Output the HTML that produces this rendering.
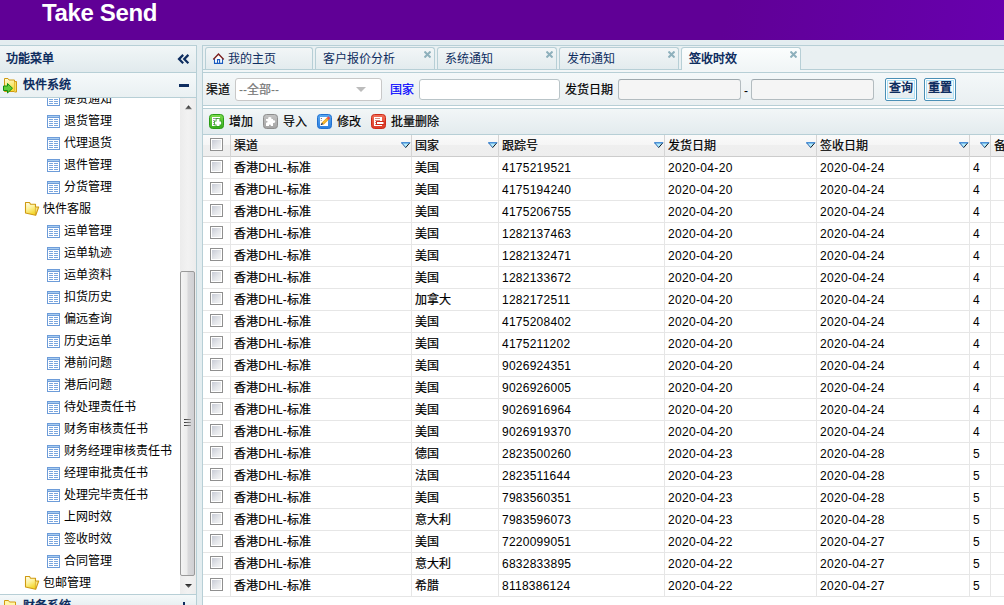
<!DOCTYPE html><html lang="zh-CN"><head><meta charset="utf-8"><style>
*{box-sizing:border-box}
html,body{margin:0;padding:0;width:1004px;height:605px;overflow:hidden;background:#e4edf0;font-family:"Liberation Sans",sans-serif;font-size:12px;color:#000}
.c{-webkit-text-stroke:0.2px currentColor}
[style*="font-weight:bold"] .c,.tn .c,.ns .c{-webkit-text-stroke:0}
.a{position:absolute}
.hb{position:absolute;height:1px;background:#b7cfd6}
.vb{position:absolute;width:1px;background:#b7cfd6}
.tn{position:absolute;height:22px;line-height:22px;white-space:nowrap}
.gt{position:absolute;height:22px;line-height:22px;white-space:nowrap;font-size:12px}
</style></head><body>
<div class="a" style="left:0;top:0;width:1004px;height:40px;background:linear-gradient(100deg,#600096 0,#600096 72%,#6400a4 88%,#6800ae 100%)"></div>
<div class="a" style="left:42px;top:0px;color:#fff;font-weight:bold;font-size:24px;line-height:26px;letter-spacing:-0.35px">Take Send</div>
<div class="a" style="left:0;top:45px;width:196px;height:560px;background:#fff"></div>
<div class="hb" style="left:0;top:45px;width:197px"></div>
<div class="vb" style="left:196px;top:45px;height:560px"></div>
<div class="a" style="left:0;top:46px;width:196px;height:26px;background:linear-gradient(#f1f6f7,#e1eaed)"></div>
<div class="hb" style="left:0;top:72px;width:196px"></div>
<div class="a" style="left:6px;top:47px;line-height:24px;font-weight:bold;color:#0e2d5f"><span class="c">功能菜单</span></div>
<svg class="a" style="left:176px;top:52px" width="14" height="14" viewBox="0 0 14 14"><path d="M7.2 2.9 L3 7.1 L7.2 11.3 M12.4 2.9 L8.2 7.1 L12.4 11.3" stroke="#0e2d5f" stroke-width="2.2" fill="none"/></svg>
<div class="a" style="left:0;top:73px;width:196px;height:24px;background:linear-gradient(#f5f9fa,#e9f0f2)"></div>
<div class="hb" style="left:0;top:97px;width:196px"></div>
<div class="a" style="left:23px;top:73px;line-height:24px;font-weight:bold;color:#0e2d5f"><span class="c">快件系统</span></div>
<div class="a" style="left:179px;top:84px;width:10px;height:3px;background:#0e2d5f"></div>
<svg class="a" style="left:2px;top:77px" width="17" height="17" viewBox="0 0 17 17">
<defs><linearGradient id="fya" x1="0" y1="0" x2="0.3" y2="1"><stop offset="0" stop-color="#fffde0"/><stop offset="1" stop-color="#f6dc3a"/></linearGradient></defs>
<path d="M2.5 1.5 H6 L7 3 H12.5 V14.5 H2.5 Z" fill="url(#fya)" stroke="#cf9a12" stroke-width="1"/>
<path d="M12.5 4.5 H14.5 V15 H12.5" fill="#f8e060" stroke="#cf9a12" stroke-width="1"/>
<path d="M1.5 9 H5.5 V6.5 L10.5 11.2 L5.5 16 V13.5 H1.5 Z" fill="#62cc3a" stroke="#109010" stroke-width="1"/>
</svg>
<div class="a" style="left:0;top:98px;width:180px;height:496px;overflow:hidden">
<svg class="a" style="left:47px;top:-5px" width="13" height="13" viewBox="0 0 13 13" shape-rendering="crispEdges">
<rect x="0.5" y="0.5" width="12" height="12" fill="#fff" stroke="#6d9cd9"/>
<rect x="1" y="1" width="11" height="1" fill="#a9cdf0"/>
<rect x="1" y="2" width="11" height="1" fill="#6d9cd9"/>
<rect x="2" y="4" width="4" height="1" fill="#7aa6de"/><rect x="7" y="4" width="4" height="1" fill="#7aa6de"/>
<rect x="2" y="6" width="4" height="1" fill="#7aa6de"/><rect x="7" y="6" width="4" height="1" fill="#7aa6de"/>
<rect x="2" y="8" width="4" height="1" fill="#7aa6de"/><rect x="7" y="8" width="4" height="1" fill="#7aa6de"/>
<rect x="2" y="10" width="4" height="1" fill="#7aa6de"/><rect x="7" y="10" width="4" height="1" fill="#7aa6de"/>
</svg>
<div class="tn" style="left:64px;top:-10px"><span class="c">提货通知</span></div>
<svg class="a" style="left:47px;top:17px" width="13" height="13" viewBox="0 0 13 13" shape-rendering="crispEdges">
<rect x="0.5" y="0.5" width="12" height="12" fill="#fff" stroke="#6d9cd9"/>
<rect x="1" y="1" width="11" height="1" fill="#a9cdf0"/>
<rect x="1" y="2" width="11" height="1" fill="#6d9cd9"/>
<rect x="2" y="4" width="4" height="1" fill="#7aa6de"/><rect x="7" y="4" width="4" height="1" fill="#7aa6de"/>
<rect x="2" y="6" width="4" height="1" fill="#7aa6de"/><rect x="7" y="6" width="4" height="1" fill="#7aa6de"/>
<rect x="2" y="8" width="4" height="1" fill="#7aa6de"/><rect x="7" y="8" width="4" height="1" fill="#7aa6de"/>
<rect x="2" y="10" width="4" height="1" fill="#7aa6de"/><rect x="7" y="10" width="4" height="1" fill="#7aa6de"/>
</svg>
<div class="tn" style="left:64px;top:12px"><span class="c">退货管理</span></div>
<svg class="a" style="left:47px;top:39px" width="13" height="13" viewBox="0 0 13 13" shape-rendering="crispEdges">
<rect x="0.5" y="0.5" width="12" height="12" fill="#fff" stroke="#6d9cd9"/>
<rect x="1" y="1" width="11" height="1" fill="#a9cdf0"/>
<rect x="1" y="2" width="11" height="1" fill="#6d9cd9"/>
<rect x="2" y="4" width="4" height="1" fill="#7aa6de"/><rect x="7" y="4" width="4" height="1" fill="#7aa6de"/>
<rect x="2" y="6" width="4" height="1" fill="#7aa6de"/><rect x="7" y="6" width="4" height="1" fill="#7aa6de"/>
<rect x="2" y="8" width="4" height="1" fill="#7aa6de"/><rect x="7" y="8" width="4" height="1" fill="#7aa6de"/>
<rect x="2" y="10" width="4" height="1" fill="#7aa6de"/><rect x="7" y="10" width="4" height="1" fill="#7aa6de"/>
</svg>
<div class="tn" style="left:64px;top:34px"><span class="c">代理退货</span></div>
<svg class="a" style="left:47px;top:61px" width="13" height="13" viewBox="0 0 13 13" shape-rendering="crispEdges">
<rect x="0.5" y="0.5" width="12" height="12" fill="#fff" stroke="#6d9cd9"/>
<rect x="1" y="1" width="11" height="1" fill="#a9cdf0"/>
<rect x="1" y="2" width="11" height="1" fill="#6d9cd9"/>
<rect x="2" y="4" width="4" height="1" fill="#7aa6de"/><rect x="7" y="4" width="4" height="1" fill="#7aa6de"/>
<rect x="2" y="6" width="4" height="1" fill="#7aa6de"/><rect x="7" y="6" width="4" height="1" fill="#7aa6de"/>
<rect x="2" y="8" width="4" height="1" fill="#7aa6de"/><rect x="7" y="8" width="4" height="1" fill="#7aa6de"/>
<rect x="2" y="10" width="4" height="1" fill="#7aa6de"/><rect x="7" y="10" width="4" height="1" fill="#7aa6de"/>
</svg>
<div class="tn" style="left:64px;top:56px"><span class="c">退件管理</span></div>
<svg class="a" style="left:47px;top:83px" width="13" height="13" viewBox="0 0 13 13" shape-rendering="crispEdges">
<rect x="0.5" y="0.5" width="12" height="12" fill="#fff" stroke="#6d9cd9"/>
<rect x="1" y="1" width="11" height="1" fill="#a9cdf0"/>
<rect x="1" y="2" width="11" height="1" fill="#6d9cd9"/>
<rect x="2" y="4" width="4" height="1" fill="#7aa6de"/><rect x="7" y="4" width="4" height="1" fill="#7aa6de"/>
<rect x="2" y="6" width="4" height="1" fill="#7aa6de"/><rect x="7" y="6" width="4" height="1" fill="#7aa6de"/>
<rect x="2" y="8" width="4" height="1" fill="#7aa6de"/><rect x="7" y="8" width="4" height="1" fill="#7aa6de"/>
<rect x="2" y="10" width="4" height="1" fill="#7aa6de"/><rect x="7" y="10" width="4" height="1" fill="#7aa6de"/>
</svg>
<div class="tn" style="left:64px;top:78px"><span class="c">分货管理</span></div>
<svg class="a" style="left:24px;top:103px" width="16" height="16" viewBox="0 0 16 16">
<defs><linearGradient id="fy103" x1="0" y1="0" x2="0.4" y2="1"><stop offset="0" stop-color="#fffef0"/><stop offset="0.5" stop-color="#fdf3a0"/><stop offset="1" stop-color="#f4d830"/></linearGradient></defs>
<path d="M1.5 1.5 H5.5 L6.6 3.3 H11.5 V14.3 L1.5 12 Z" fill="url(#fy103)" stroke="#cf9a12" stroke-width="1.1" stroke-linejoin="round"/>
<path d="M11.5 6 H14.7 L11.7 14.3" fill="#fbe680" stroke="#cf9a12" stroke-width="1.1" stroke-linejoin="round"/>
</svg>
<div class="tn" style="left:43px;top:100px"><span class="c">快件客服</span></div>
<svg class="a" style="left:47px;top:127px" width="13" height="13" viewBox="0 0 13 13" shape-rendering="crispEdges">
<rect x="0.5" y="0.5" width="12" height="12" fill="#fff" stroke="#6d9cd9"/>
<rect x="1" y="1" width="11" height="1" fill="#a9cdf0"/>
<rect x="1" y="2" width="11" height="1" fill="#6d9cd9"/>
<rect x="2" y="4" width="4" height="1" fill="#7aa6de"/><rect x="7" y="4" width="4" height="1" fill="#7aa6de"/>
<rect x="2" y="6" width="4" height="1" fill="#7aa6de"/><rect x="7" y="6" width="4" height="1" fill="#7aa6de"/>
<rect x="2" y="8" width="4" height="1" fill="#7aa6de"/><rect x="7" y="8" width="4" height="1" fill="#7aa6de"/>
<rect x="2" y="10" width="4" height="1" fill="#7aa6de"/><rect x="7" y="10" width="4" height="1" fill="#7aa6de"/>
</svg>
<div class="tn" style="left:64px;top:122px"><span class="c">运单管理</span></div>
<svg class="a" style="left:47px;top:149px" width="13" height="13" viewBox="0 0 13 13" shape-rendering="crispEdges">
<rect x="0.5" y="0.5" width="12" height="12" fill="#fff" stroke="#6d9cd9"/>
<rect x="1" y="1" width="11" height="1" fill="#a9cdf0"/>
<rect x="1" y="2" width="11" height="1" fill="#6d9cd9"/>
<rect x="2" y="4" width="4" height="1" fill="#7aa6de"/><rect x="7" y="4" width="4" height="1" fill="#7aa6de"/>
<rect x="2" y="6" width="4" height="1" fill="#7aa6de"/><rect x="7" y="6" width="4" height="1" fill="#7aa6de"/>
<rect x="2" y="8" width="4" height="1" fill="#7aa6de"/><rect x="7" y="8" width="4" height="1" fill="#7aa6de"/>
<rect x="2" y="10" width="4" height="1" fill="#7aa6de"/><rect x="7" y="10" width="4" height="1" fill="#7aa6de"/>
</svg>
<div class="tn" style="left:64px;top:144px"><span class="c">运单轨迹</span></div>
<svg class="a" style="left:47px;top:171px" width="13" height="13" viewBox="0 0 13 13" shape-rendering="crispEdges">
<rect x="0.5" y="0.5" width="12" height="12" fill="#fff" stroke="#6d9cd9"/>
<rect x="1" y="1" width="11" height="1" fill="#a9cdf0"/>
<rect x="1" y="2" width="11" height="1" fill="#6d9cd9"/>
<rect x="2" y="4" width="4" height="1" fill="#7aa6de"/><rect x="7" y="4" width="4" height="1" fill="#7aa6de"/>
<rect x="2" y="6" width="4" height="1" fill="#7aa6de"/><rect x="7" y="6" width="4" height="1" fill="#7aa6de"/>
<rect x="2" y="8" width="4" height="1" fill="#7aa6de"/><rect x="7" y="8" width="4" height="1" fill="#7aa6de"/>
<rect x="2" y="10" width="4" height="1" fill="#7aa6de"/><rect x="7" y="10" width="4" height="1" fill="#7aa6de"/>
</svg>
<div class="tn" style="left:64px;top:166px"><span class="c">运单资料</span></div>
<svg class="a" style="left:47px;top:193px" width="13" height="13" viewBox="0 0 13 13" shape-rendering="crispEdges">
<rect x="0.5" y="0.5" width="12" height="12" fill="#fff" stroke="#6d9cd9"/>
<rect x="1" y="1" width="11" height="1" fill="#a9cdf0"/>
<rect x="1" y="2" width="11" height="1" fill="#6d9cd9"/>
<rect x="2" y="4" width="4" height="1" fill="#7aa6de"/><rect x="7" y="4" width="4" height="1" fill="#7aa6de"/>
<rect x="2" y="6" width="4" height="1" fill="#7aa6de"/><rect x="7" y="6" width="4" height="1" fill="#7aa6de"/>
<rect x="2" y="8" width="4" height="1" fill="#7aa6de"/><rect x="7" y="8" width="4" height="1" fill="#7aa6de"/>
<rect x="2" y="10" width="4" height="1" fill="#7aa6de"/><rect x="7" y="10" width="4" height="1" fill="#7aa6de"/>
</svg>
<div class="tn" style="left:64px;top:188px"><span class="c">扣货历史</span></div>
<svg class="a" style="left:47px;top:215px" width="13" height="13" viewBox="0 0 13 13" shape-rendering="crispEdges">
<rect x="0.5" y="0.5" width="12" height="12" fill="#fff" stroke="#6d9cd9"/>
<rect x="1" y="1" width="11" height="1" fill="#a9cdf0"/>
<rect x="1" y="2" width="11" height="1" fill="#6d9cd9"/>
<rect x="2" y="4" width="4" height="1" fill="#7aa6de"/><rect x="7" y="4" width="4" height="1" fill="#7aa6de"/>
<rect x="2" y="6" width="4" height="1" fill="#7aa6de"/><rect x="7" y="6" width="4" height="1" fill="#7aa6de"/>
<rect x="2" y="8" width="4" height="1" fill="#7aa6de"/><rect x="7" y="8" width="4" height="1" fill="#7aa6de"/>
<rect x="2" y="10" width="4" height="1" fill="#7aa6de"/><rect x="7" y="10" width="4" height="1" fill="#7aa6de"/>
</svg>
<div class="tn" style="left:64px;top:210px"><span class="c">偏远查询</span></div>
<svg class="a" style="left:47px;top:237px" width="13" height="13" viewBox="0 0 13 13" shape-rendering="crispEdges">
<rect x="0.5" y="0.5" width="12" height="12" fill="#fff" stroke="#6d9cd9"/>
<rect x="1" y="1" width="11" height="1" fill="#a9cdf0"/>
<rect x="1" y="2" width="11" height="1" fill="#6d9cd9"/>
<rect x="2" y="4" width="4" height="1" fill="#7aa6de"/><rect x="7" y="4" width="4" height="1" fill="#7aa6de"/>
<rect x="2" y="6" width="4" height="1" fill="#7aa6de"/><rect x="7" y="6" width="4" height="1" fill="#7aa6de"/>
<rect x="2" y="8" width="4" height="1" fill="#7aa6de"/><rect x="7" y="8" width="4" height="1" fill="#7aa6de"/>
<rect x="2" y="10" width="4" height="1" fill="#7aa6de"/><rect x="7" y="10" width="4" height="1" fill="#7aa6de"/>
</svg>
<div class="tn" style="left:64px;top:232px"><span class="c">历史运单</span></div>
<svg class="a" style="left:47px;top:259px" width="13" height="13" viewBox="0 0 13 13" shape-rendering="crispEdges">
<rect x="0.5" y="0.5" width="12" height="12" fill="#fff" stroke="#6d9cd9"/>
<rect x="1" y="1" width="11" height="1" fill="#a9cdf0"/>
<rect x="1" y="2" width="11" height="1" fill="#6d9cd9"/>
<rect x="2" y="4" width="4" height="1" fill="#7aa6de"/><rect x="7" y="4" width="4" height="1" fill="#7aa6de"/>
<rect x="2" y="6" width="4" height="1" fill="#7aa6de"/><rect x="7" y="6" width="4" height="1" fill="#7aa6de"/>
<rect x="2" y="8" width="4" height="1" fill="#7aa6de"/><rect x="7" y="8" width="4" height="1" fill="#7aa6de"/>
<rect x="2" y="10" width="4" height="1" fill="#7aa6de"/><rect x="7" y="10" width="4" height="1" fill="#7aa6de"/>
</svg>
<div class="tn" style="left:64px;top:254px"><span class="c">港前问题</span></div>
<svg class="a" style="left:47px;top:281px" width="13" height="13" viewBox="0 0 13 13" shape-rendering="crispEdges">
<rect x="0.5" y="0.5" width="12" height="12" fill="#fff" stroke="#6d9cd9"/>
<rect x="1" y="1" width="11" height="1" fill="#a9cdf0"/>
<rect x="1" y="2" width="11" height="1" fill="#6d9cd9"/>
<rect x="2" y="4" width="4" height="1" fill="#7aa6de"/><rect x="7" y="4" width="4" height="1" fill="#7aa6de"/>
<rect x="2" y="6" width="4" height="1" fill="#7aa6de"/><rect x="7" y="6" width="4" height="1" fill="#7aa6de"/>
<rect x="2" y="8" width="4" height="1" fill="#7aa6de"/><rect x="7" y="8" width="4" height="1" fill="#7aa6de"/>
<rect x="2" y="10" width="4" height="1" fill="#7aa6de"/><rect x="7" y="10" width="4" height="1" fill="#7aa6de"/>
</svg>
<div class="tn" style="left:64px;top:276px"><span class="c">港后问题</span></div>
<svg class="a" style="left:47px;top:303px" width="13" height="13" viewBox="0 0 13 13" shape-rendering="crispEdges">
<rect x="0.5" y="0.5" width="12" height="12" fill="#fff" stroke="#6d9cd9"/>
<rect x="1" y="1" width="11" height="1" fill="#a9cdf0"/>
<rect x="1" y="2" width="11" height="1" fill="#6d9cd9"/>
<rect x="2" y="4" width="4" height="1" fill="#7aa6de"/><rect x="7" y="4" width="4" height="1" fill="#7aa6de"/>
<rect x="2" y="6" width="4" height="1" fill="#7aa6de"/><rect x="7" y="6" width="4" height="1" fill="#7aa6de"/>
<rect x="2" y="8" width="4" height="1" fill="#7aa6de"/><rect x="7" y="8" width="4" height="1" fill="#7aa6de"/>
<rect x="2" y="10" width="4" height="1" fill="#7aa6de"/><rect x="7" y="10" width="4" height="1" fill="#7aa6de"/>
</svg>
<div class="tn" style="left:64px;top:298px"><span class="c">待处理责任书</span></div>
<svg class="a" style="left:47px;top:325px" width="13" height="13" viewBox="0 0 13 13" shape-rendering="crispEdges">
<rect x="0.5" y="0.5" width="12" height="12" fill="#fff" stroke="#6d9cd9"/>
<rect x="1" y="1" width="11" height="1" fill="#a9cdf0"/>
<rect x="1" y="2" width="11" height="1" fill="#6d9cd9"/>
<rect x="2" y="4" width="4" height="1" fill="#7aa6de"/><rect x="7" y="4" width="4" height="1" fill="#7aa6de"/>
<rect x="2" y="6" width="4" height="1" fill="#7aa6de"/><rect x="7" y="6" width="4" height="1" fill="#7aa6de"/>
<rect x="2" y="8" width="4" height="1" fill="#7aa6de"/><rect x="7" y="8" width="4" height="1" fill="#7aa6de"/>
<rect x="2" y="10" width="4" height="1" fill="#7aa6de"/><rect x="7" y="10" width="4" height="1" fill="#7aa6de"/>
</svg>
<div class="tn" style="left:64px;top:320px"><span class="c">财务审核责任书</span></div>
<svg class="a" style="left:47px;top:347px" width="13" height="13" viewBox="0 0 13 13" shape-rendering="crispEdges">
<rect x="0.5" y="0.5" width="12" height="12" fill="#fff" stroke="#6d9cd9"/>
<rect x="1" y="1" width="11" height="1" fill="#a9cdf0"/>
<rect x="1" y="2" width="11" height="1" fill="#6d9cd9"/>
<rect x="2" y="4" width="4" height="1" fill="#7aa6de"/><rect x="7" y="4" width="4" height="1" fill="#7aa6de"/>
<rect x="2" y="6" width="4" height="1" fill="#7aa6de"/><rect x="7" y="6" width="4" height="1" fill="#7aa6de"/>
<rect x="2" y="8" width="4" height="1" fill="#7aa6de"/><rect x="7" y="8" width="4" height="1" fill="#7aa6de"/>
<rect x="2" y="10" width="4" height="1" fill="#7aa6de"/><rect x="7" y="10" width="4" height="1" fill="#7aa6de"/>
</svg>
<div class="tn" style="left:64px;top:342px"><span class="c">财务经理审核责任书</span></div>
<svg class="a" style="left:47px;top:369px" width="13" height="13" viewBox="0 0 13 13" shape-rendering="crispEdges">
<rect x="0.5" y="0.5" width="12" height="12" fill="#fff" stroke="#6d9cd9"/>
<rect x="1" y="1" width="11" height="1" fill="#a9cdf0"/>
<rect x="1" y="2" width="11" height="1" fill="#6d9cd9"/>
<rect x="2" y="4" width="4" height="1" fill="#7aa6de"/><rect x="7" y="4" width="4" height="1" fill="#7aa6de"/>
<rect x="2" y="6" width="4" height="1" fill="#7aa6de"/><rect x="7" y="6" width="4" height="1" fill="#7aa6de"/>
<rect x="2" y="8" width="4" height="1" fill="#7aa6de"/><rect x="7" y="8" width="4" height="1" fill="#7aa6de"/>
<rect x="2" y="10" width="4" height="1" fill="#7aa6de"/><rect x="7" y="10" width="4" height="1" fill="#7aa6de"/>
</svg>
<div class="tn" style="left:64px;top:364px"><span class="c">经理审批责任书</span></div>
<svg class="a" style="left:47px;top:391px" width="13" height="13" viewBox="0 0 13 13" shape-rendering="crispEdges">
<rect x="0.5" y="0.5" width="12" height="12" fill="#fff" stroke="#6d9cd9"/>
<rect x="1" y="1" width="11" height="1" fill="#a9cdf0"/>
<rect x="1" y="2" width="11" height="1" fill="#6d9cd9"/>
<rect x="2" y="4" width="4" height="1" fill="#7aa6de"/><rect x="7" y="4" width="4" height="1" fill="#7aa6de"/>
<rect x="2" y="6" width="4" height="1" fill="#7aa6de"/><rect x="7" y="6" width="4" height="1" fill="#7aa6de"/>
<rect x="2" y="8" width="4" height="1" fill="#7aa6de"/><rect x="7" y="8" width="4" height="1" fill="#7aa6de"/>
<rect x="2" y="10" width="4" height="1" fill="#7aa6de"/><rect x="7" y="10" width="4" height="1" fill="#7aa6de"/>
</svg>
<div class="tn" style="left:64px;top:386px"><span class="c">处理完毕责任书</span></div>
<svg class="a" style="left:47px;top:413px" width="13" height="13" viewBox="0 0 13 13" shape-rendering="crispEdges">
<rect x="0.5" y="0.5" width="12" height="12" fill="#fff" stroke="#6d9cd9"/>
<rect x="1" y="1" width="11" height="1" fill="#a9cdf0"/>
<rect x="1" y="2" width="11" height="1" fill="#6d9cd9"/>
<rect x="2" y="4" width="4" height="1" fill="#7aa6de"/><rect x="7" y="4" width="4" height="1" fill="#7aa6de"/>
<rect x="2" y="6" width="4" height="1" fill="#7aa6de"/><rect x="7" y="6" width="4" height="1" fill="#7aa6de"/>
<rect x="2" y="8" width="4" height="1" fill="#7aa6de"/><rect x="7" y="8" width="4" height="1" fill="#7aa6de"/>
<rect x="2" y="10" width="4" height="1" fill="#7aa6de"/><rect x="7" y="10" width="4" height="1" fill="#7aa6de"/>
</svg>
<div class="tn" style="left:64px;top:408px"><span class="c">上网时效</span></div>
<svg class="a" style="left:47px;top:435px" width="13" height="13" viewBox="0 0 13 13" shape-rendering="crispEdges">
<rect x="0.5" y="0.5" width="12" height="12" fill="#fff" stroke="#6d9cd9"/>
<rect x="1" y="1" width="11" height="1" fill="#a9cdf0"/>
<rect x="1" y="2" width="11" height="1" fill="#6d9cd9"/>
<rect x="2" y="4" width="4" height="1" fill="#7aa6de"/><rect x="7" y="4" width="4" height="1" fill="#7aa6de"/>
<rect x="2" y="6" width="4" height="1" fill="#7aa6de"/><rect x="7" y="6" width="4" height="1" fill="#7aa6de"/>
<rect x="2" y="8" width="4" height="1" fill="#7aa6de"/><rect x="7" y="8" width="4" height="1" fill="#7aa6de"/>
<rect x="2" y="10" width="4" height="1" fill="#7aa6de"/><rect x="7" y="10" width="4" height="1" fill="#7aa6de"/>
</svg>
<div class="tn" style="left:64px;top:430px"><span class="c">签收时效</span></div>
<svg class="a" style="left:47px;top:457px" width="13" height="13" viewBox="0 0 13 13" shape-rendering="crispEdges">
<rect x="0.5" y="0.5" width="12" height="12" fill="#fff" stroke="#6d9cd9"/>
<rect x="1" y="1" width="11" height="1" fill="#a9cdf0"/>
<rect x="1" y="2" width="11" height="1" fill="#6d9cd9"/>
<rect x="2" y="4" width="4" height="1" fill="#7aa6de"/><rect x="7" y="4" width="4" height="1" fill="#7aa6de"/>
<rect x="2" y="6" width="4" height="1" fill="#7aa6de"/><rect x="7" y="6" width="4" height="1" fill="#7aa6de"/>
<rect x="2" y="8" width="4" height="1" fill="#7aa6de"/><rect x="7" y="8" width="4" height="1" fill="#7aa6de"/>
<rect x="2" y="10" width="4" height="1" fill="#7aa6de"/><rect x="7" y="10" width="4" height="1" fill="#7aa6de"/>
</svg>
<div class="tn" style="left:64px;top:452px"><span class="c">合同管理</span></div>
<svg class="a" style="left:24px;top:477px" width="16" height="16" viewBox="0 0 16 16">
<defs><linearGradient id="fy477" x1="0" y1="0" x2="0.4" y2="1"><stop offset="0" stop-color="#fffef0"/><stop offset="0.5" stop-color="#fdf3a0"/><stop offset="1" stop-color="#f4d830"/></linearGradient></defs>
<path d="M1.5 1.5 H5.5 L6.6 3.3 H11.5 V14.3 L1.5 12 Z" fill="url(#fy477)" stroke="#cf9a12" stroke-width="1.1" stroke-linejoin="round"/>
<path d="M11.5 6 H14.7 L11.7 14.3" fill="#fbe680" stroke="#cf9a12" stroke-width="1.1" stroke-linejoin="round"/>
</svg>
<div class="tn" style="left:43px;top:474px"><span class="c">包邮管理</span></div>
</div>
<div class="a" style="left:180px;top:98px;width:16px;height:496px;background:linear-gradient(90deg,#ececec,#f2f2f2 50%,#ececec)"></div>
<svg class="a" style="left:184px;top:104px" width="9" height="6"><defs><linearGradient id="sa1" x1="0" y1="0" x2="0" y2="1"><stop offset="0" stop-color="#222"/><stop offset="1" stop-color="#777"/></linearGradient></defs><path d="M1 5.2 L4.5 1.2 L8 5.2 Z" fill="url(#sa1)"/></svg>
<svg class="a" style="left:184px;top:583px" width="9" height="6"><defs><linearGradient id="sa2" x1="0" y1="0" x2="0" y2="1"><stop offset="0" stop-color="#222"/><stop offset="1" stop-color="#777"/></linearGradient></defs><path d="M1 1 L8 1 L4.5 5 Z" fill="url(#sa2)"/></svg>
<div class="a" style="left:180px;top:271px;width:15px;height:305px;border:1px solid #9a9a9a;border-radius:2px;background:linear-gradient(90deg,#f4f4f4,#ececec 45%,#d9d9db 55%,#d0d0d4)"></div>
<div class="hb" style="left:0;top:594px;width:196px"></div>
<div class="a" style="left:0;top:595px;width:196px;height:10px;background:linear-gradient(#f5f9fa,#e9f0f2)"></div>
<div class="a" style="left:23px;top:594px;line-height:24px;font-weight:bold;color:#0e2d5f"><span class="c">财务系统</span></div>
<svg class="a" style="left:3px;top:599px" width="16" height="15" viewBox="0 0 16 15"><path d="M1.5 1.5 H5.5 L6.5 3 H12.5 V12.5 H1.5 Z" fill="#fff7a8" stroke="#d49a10" stroke-width="1"/></svg>
<div class="a" style="left:183px;top:602px;width:2px;height:10px;background:#0e2d5f"></div>
<div class="a" style="left:184px;top:419px;width:7px;height:1px;background:linear-gradient(90deg,#333,#999)"></div>
<div class="a" style="left:184px;top:422px;width:7px;height:1px;background:linear-gradient(90deg,#333,#999)"></div>
<div class="a" style="left:184px;top:425px;width:7px;height:1px;background:linear-gradient(90deg,#333,#999)"></div>
<div class="vb" style="left:202px;top:45px;height:560px"></div>
<div class="hb" style="left:202px;top:45px;width:802px"></div>
<div class="a" style="left:203px;top:46px;width:801px;height:23px;background:#e9f0f2"></div>
<div class="hb" style="left:203px;top:69px;width:801px"></div>
<div class="a" style="left:205px;top:47px;width:108px;height:22px;border:1px solid #b7cfd6;border-bottom:none;border-radius:3px 3px 0 0;background:linear-gradient(#f2f6f7,#e3ebee)"></div>
<div class="a ns" style="left:228px;top:48px;line-height:22px;color:#0e2d5f"><span class="c">我的主页</span></div>
<div class="a" style="left:315px;top:47px;width:120px;height:22px;border:1px solid #b7cfd6;border-bottom:none;border-radius:3px 3px 0 0;background:linear-gradient(#f2f6f7,#e3ebee)"></div>
<div class="a ns" style="left:323px;top:48px;line-height:22px;color:#0e2d5f"><span class="c">客户报价分析</span></div>
<svg class="a" style="left:424px;top:51px" width="7" height="7"><path d="M0.5 0.5 L6.5 6.5 M6.5 0.5 L0.5 6.5" stroke="#8eb0bc" stroke-width="2"/></svg>
<div class="a" style="left:437px;top:47px;width:120px;height:22px;border:1px solid #b7cfd6;border-bottom:none;border-radius:3px 3px 0 0;background:linear-gradient(#f2f6f7,#e3ebee)"></div>
<div class="a ns" style="left:445px;top:48px;line-height:22px;color:#0e2d5f"><span class="c">系统通知</span></div>
<svg class="a" style="left:546px;top:51px" width="7" height="7"><path d="M0.5 0.5 L6.5 6.5 M6.5 0.5 L0.5 6.5" stroke="#8eb0bc" stroke-width="2"/></svg>
<div class="a" style="left:559px;top:47px;width:120px;height:22px;border:1px solid #b7cfd6;border-bottom:none;border-radius:3px 3px 0 0;background:linear-gradient(#f2f6f7,#e3ebee)"></div>
<div class="a ns" style="left:567px;top:48px;line-height:22px;color:#0e2d5f"><span class="c">发布通知</span></div>
<svg class="a" style="left:668px;top:51px" width="7" height="7"><path d="M0.5 0.5 L6.5 6.5 M6.5 0.5 L0.5 6.5" stroke="#8eb0bc" stroke-width="2"/></svg>
<div class="a" style="left:681px;top:47px;width:120px;height:24px;border:1px solid #b7cfd6;border-bottom:none;border-radius:3px 3px 0 0;background:linear-gradient(#fbfdfd,#f0f5f6)"></div>
<div class="a" style="left:689px;top:48px;line-height:22px;font-weight:bold;color:#0e2d5f"><span class="c">签收时效</span></div>
<svg class="a" style="left:790px;top:51px" width="7" height="7"><path d="M0.5 0.5 L6.5 6.5 M6.5 0.5 L0.5 6.5" stroke="#8eb0bc" stroke-width="2"/></svg>
<svg class="a" style="left:212px;top:52px" width="13" height="13" viewBox="0 0 13 13"><path d="M6.5 2.2 L2.5 6.2 V11.5 H10.5 V6.2 Z" fill="#fff"/><path d="M2.5 6.5 V11.4 H10.5 V6.5" stroke="#1a5cc0" stroke-width="1.1" fill="none"/><path d="M5.5 11.4 V7.6 H7.6 V11.4" stroke="#1a5cc0" stroke-width="1.1" fill="none"/><path d="M1.3 7.4 L6.5 2 L11.7 7.4" stroke="#7a1f1f" stroke-width="1.4" fill="none"/></svg>
<div class="a" style="left:203px;top:70px;width:801px;height:2px;background:#f2f6f7"></div>
<div class="hb" style="left:203px;top:72px;width:801px"></div>
<div class="a" style="left:203px;top:73px;width:801px;height:32px;background:linear-gradient(#f4f8f9,#e9eff1)"></div>
<div class="hb" style="left:203px;top:105px;width:801px"></div>
<div class="a" style="left:203px;top:106px;width:801px;height:2px;background:#fff"></div>
<div class="hb" style="left:203px;top:108px;width:801px"></div>
<div class="a" style="left:206px;top:79px;line-height:22px"><span class="c">渠道</span></div>
<div class="a" style="left:235px;top:78px;width:147px;height:23px;border:1px solid #c8c8c8;border-radius:3px;background:#fff"></div>
<div class="a" style="left:239px;top:79px;line-height:22px;color:#777">--<span class="c">全部</span>--</div>
<svg class="a" style="left:356px;top:87px" width="10" height="5"><path d="M0 0 H10 L5 5 Z" fill="#bcbcbc"/></svg>
<div class="a" style="left:390px;top:79px;line-height:22px;color:#0000ff"><span class="c">国家</span></div>
<div class="a" style="left:419px;top:79px;width:141px;height:21px;border:1px solid #b9c4c8;border-radius:3px;background:#fff"></div>
<div class="a" style="left:565px;top:79px;line-height:22px"><span class="c">发货日期</span></div>
<div class="a" style="left:618px;top:79px;width:123px;height:21px;border:1px solid #b3bcc0;border-top-color:#9ea8ad;border-radius:3px;background:#f5f5f5"></div>
<div class="a" style="left:744px;top:80px;line-height:22px">-</div>
<div class="a" style="left:751px;top:79px;width:123px;height:21px;border:1px solid #b3bcc0;border-top-color:#9ea8ad;border-radius:3px;background:#f5f5f5"></div>
<div class="a" style="left:885px;top:78px;width:32px;height:23px;border:1px solid #4a8fb5;border-radius:2px;background:linear-gradient(#f6fafb 0,#f3f7f9 68%,#e6eef1 68%);box-shadow:inset 0 0 0 1px #fff,inset 0 0 0 2px #ace0f5"></div>
<div class="a" style="left:889px;top:77px;line-height:22px;font-weight:bold;color:#0e2d5f"><span class="c">查询</span></div>
<div class="a" style="left:924px;top:78px;width:32px;height:23px;border:1px solid #4a8fb5;border-radius:2px;background:linear-gradient(#f6fafb 0,#f3f7f9 68%,#e6eef1 68%);box-shadow:inset 0 0 0 1px #fff,inset 0 0 0 2px #ace0f5"></div>
<div class="a" style="left:928px;top:77px;line-height:22px;font-weight:bold;color:#0e2d5f"><span class="c">重置</span></div>
<div class="a" style="left:203px;top:109px;width:801px;height:25px;background:linear-gradient(#f2f6f7,#e3ebee)"></div>
<div class="hb" style="left:203px;top:134px;width:801px"></div>
<svg class="a" style="left:209px;top:114px" width="15" height="15" viewBox="0 0 15 15">
<defs><linearGradient id="gg" x1="0" y1="0" x2="0" y2="1"><stop offset="0" stop-color="#7ddc4e"/><stop offset="1" stop-color="#38ac1c"/></linearGradient></defs>
<rect x="0.5" y="0.5" width="14" height="14" rx="3" fill="url(#gg)" stroke="#2a9c16"/>
<rect x="3" y="3" width="8" height="9" fill="#fff"/>
<path d="M4 4.5h5M4 6.5h1.5M4 8.5h1M4 10.5h1" stroke="#8a8a9a" stroke-width="0.9"/>
<path d="M7.5 5H10.5V7.5H12.2V10.5H10.5V12H7.5V10.5H5.8V7.5H7.5Z" fill="#fff" stroke="#2aa018" stroke-width="1.5" paint-order="stroke"/>
</svg>
<svg class="a" style="left:263px;top:114px" width="15" height="15" viewBox="0 0 15 15">
<defs><linearGradient id="gi" x1="0" y1="0" x2="0" y2="1"><stop offset="0" stop-color="#c4c4c4"/><stop offset="1" stop-color="#a4a4a4"/></linearGradient></defs>
<rect x="0.5" y="0.5" width="14" height="14" rx="3" fill="url(#gi)" stroke="#8e8e8e"/>
<path d="M3 5 H5.2 V3.6 Q6.8 2.4 8.4 3.6 V5 H10 V6.2 Q12.4 5.8 12.2 7.6 Q12.4 9.4 10 9 V12 H7.8 V11 Q6.9 10 6 11 V12 H3 V8.8 Q4.6 8.8 4.6 7.8 Q4.6 6.8 3 6.8 Z" fill="#fff"/>
</svg>
<svg class="a" style="left:317px;top:114px" width="15" height="15" viewBox="0 0 15 15">
<defs><linearGradient id="ge" x1="0" y1="0" x2="0" y2="1"><stop offset="0" stop-color="#5aa8f0"/><stop offset="1" stop-color="#2a7ee0"/></linearGradient></defs>
<rect x="0.5" y="0.5" width="14" height="14" rx="3" fill="url(#ge)" stroke="#2070d0"/>
<rect x="3" y="3" width="8" height="9" fill="#fff"/>
<path d="M3.8 4.5h1.2M3.8 6.5h0.8" stroke="#667" stroke-width="0.9"/>
<path d="M5.6 9.8L11 4.4" stroke="#e8a020" stroke-width="2.8"/>
<path d="M5.6 9.8L11 4.4" stroke="#ffd040" stroke-width="1"/>
<path d="M10.5 3.2L12.4 5.1" stroke="#e84a4a" stroke-width="2.4"/>
<path d="M3.5 11.2L4.8 8.8L6.3 10.3Z" fill="#102040"/>
</svg>
<svg class="a" style="left:371px;top:114px" width="15" height="15" viewBox="0 0 15 15">
<defs><linearGradient id="gd" x1="0" y1="0" x2="0" y2="1"><stop offset="0" stop-color="#f2705a"/><stop offset="1" stop-color="#dc3a26"/></linearGradient></defs>
<rect x="0.5" y="0.5" width="14" height="14" rx="3" fill="url(#gd)" stroke="#cc2a18"/>
<rect x="3" y="3" width="8" height="9" fill="#fff"/>
<path d="M4 4.5h5M4 6.5h5M4 8.5h1M4 10.5h1" stroke="#d08070" stroke-width="0.9"/>
<rect x="5.5" y="7.5" width="7.5" height="3" fill="#fff" stroke="#d02818" stroke-width="1"/>
</svg>
<div class="a" style="left:229px;top:111px;line-height:22px"><span class="c">增加</span></div>
<div class="a" style="left:283px;top:111px;line-height:22px"><span class="c">导入</span></div>
<div class="a" style="left:337px;top:111px;line-height:22px"><span class="c">修改</span></div>
<div class="a" style="left:391px;top:111px;line-height:22px"><span class="c">批量删除</span></div>
<div class="a" style="left:203px;top:135px;width:801px;height:21px;background:linear-gradient(#fafafa 0,#f6f6f6 45%,#efefef 50%,#eeeeee 100%)"></div>
<div class="a" style="left:203px;top:156px;width:801px;height:1px;background:#ccc"></div>
<div class="a" style="left:230px;top:135px;width:1px;height:22px;background:#d4d4d4"></div>
<div class="a" style="left:411px;top:135px;width:1px;height:22px;background:#d4d4d4"></div>
<div class="a" style="left:498px;top:135px;width:1px;height:22px;background:#d4d4d4"></div>
<div class="a" style="left:664px;top:135px;width:1px;height:22px;background:#d4d4d4"></div>
<div class="a" style="left:816px;top:135px;width:1px;height:22px;background:#d4d4d4"></div>
<div class="a" style="left:969px;top:135px;width:1px;height:22px;background:#d4d4d4"></div>
<div class="a" style="left:990px;top:135px;width:1px;height:22px;background:#d4d4d4"></div>
<div class="a" style="left:210px;top:138px;width:13px;height:13px;border:1px solid #8f8f8f;background:linear-gradient(135deg,#c2c6d2,#e4e6ea 55%,#f8f8f8);box-shadow:inset 0 0 0 1px #fff"></div>
<div class="gt" style="left:234px;top:135px"><span class="c">渠道</span></div>
<svg class="a" style="left:401px;top:142px" width="10" height="7" viewBox="0 0 10 7"><path d="M0.6 0.6 H8.8 L4.7 5.6 Z" fill="#b4ecfc"/><path d="M0.6 0.8 L4.7 5.6" stroke="#2860a8" stroke-width="1"/><path d="M8.8 0.8 L4.7 5.6" stroke="#101820" stroke-width="1"/><path d="M0.2 0.8 H9.1" stroke="#2a7ad0" stroke-width="1.2"/></svg>
<div class="gt" style="left:415px;top:135px"><span class="c">国家</span></div>
<svg class="a" style="left:488px;top:142px" width="10" height="7" viewBox="0 0 10 7"><path d="M0.6 0.6 H8.8 L4.7 5.6 Z" fill="#b4ecfc"/><path d="M0.6 0.8 L4.7 5.6" stroke="#2860a8" stroke-width="1"/><path d="M8.8 0.8 L4.7 5.6" stroke="#101820" stroke-width="1"/><path d="M0.2 0.8 H9.1" stroke="#2a7ad0" stroke-width="1.2"/></svg>
<div class="gt" style="left:502px;top:135px"><span class="c">跟踪号</span></div>
<svg class="a" style="left:654px;top:142px" width="10" height="7" viewBox="0 0 10 7"><path d="M0.6 0.6 H8.8 L4.7 5.6 Z" fill="#b4ecfc"/><path d="M0.6 0.8 L4.7 5.6" stroke="#2860a8" stroke-width="1"/><path d="M8.8 0.8 L4.7 5.6" stroke="#101820" stroke-width="1"/><path d="M0.2 0.8 H9.1" stroke="#2a7ad0" stroke-width="1.2"/></svg>
<div class="gt" style="left:668px;top:135px"><span class="c">发货日期</span></div>
<svg class="a" style="left:806px;top:142px" width="10" height="7" viewBox="0 0 10 7"><path d="M0.6 0.6 H8.8 L4.7 5.6 Z" fill="#b4ecfc"/><path d="M0.6 0.8 L4.7 5.6" stroke="#2860a8" stroke-width="1"/><path d="M8.8 0.8 L4.7 5.6" stroke="#101820" stroke-width="1"/><path d="M0.2 0.8 H9.1" stroke="#2a7ad0" stroke-width="1.2"/></svg>
<div class="gt" style="left:820px;top:135px"><span class="c">签收日期</span></div>
<svg class="a" style="left:959px;top:142px" width="10" height="7" viewBox="0 0 10 7"><path d="M0.6 0.6 H8.8 L4.7 5.6 Z" fill="#b4ecfc"/><path d="M0.6 0.8 L4.7 5.6" stroke="#2860a8" stroke-width="1"/><path d="M8.8 0.8 L4.7 5.6" stroke="#101820" stroke-width="1"/><path d="M0.2 0.8 H9.1" stroke="#2a7ad0" stroke-width="1.2"/></svg>
<svg class="a" style="left:980px;top:142px" width="10" height="7" viewBox="0 0 10 7"><path d="M0.6 0.6 H8.8 L4.7 5.6 Z" fill="#b4ecfc"/><path d="M0.6 0.8 L4.7 5.6" stroke="#2860a8" stroke-width="1"/><path d="M8.8 0.8 L4.7 5.6" stroke="#101820" stroke-width="1"/><path d="M0.2 0.8 H9.1" stroke="#2a7ad0" stroke-width="1.2"/></svg>
<div class="gt" style="left:994px;top:135px"><span class="c">备</span></div>
<div class="a" style="left:203px;top:157px;width:801px;height:448px;background:#fff"></div>
<div class="a" style="left:203px;top:178px;width:801px;height:1px;background:#e6e6e6"></div>
<div class="a" style="left:230px;top:157px;width:1px;height:22px;background:#e6e6e6"></div>
<div class="a" style="left:411px;top:157px;width:1px;height:22px;background:#e6e6e6"></div>
<div class="a" style="left:498px;top:157px;width:1px;height:22px;background:#e6e6e6"></div>
<div class="a" style="left:664px;top:157px;width:1px;height:22px;background:#e6e6e6"></div>
<div class="a" style="left:816px;top:157px;width:1px;height:22px;background:#e6e6e6"></div>
<div class="a" style="left:969px;top:157px;width:1px;height:22px;background:#e6e6e6"></div>
<div class="a" style="left:990px;top:157px;width:1px;height:22px;background:#e6e6e6"></div>
<div class="a" style="left:210px;top:160px;width:13px;height:13px;border:1px solid #8f8f8f;background:linear-gradient(135deg,#c2c6d2,#e4e6ea 55%,#f8f8f8);box-shadow:inset 0 0 0 1px #fff"></div>
<div class="gt" style="left:234px;top:157px;letter-spacing:0.15px"><span class="c">香港</span>DHL-<span class="c">标准</span></div>
<div class="gt" style="left:415px;top:157px"><span class="c">美国</span></div>
<div class="gt" style="left:502px;top:157px;letter-spacing:0.25px">4175219521</div>
<div class="gt" style="left:668px;top:157px;letter-spacing:0.33px">2020-04-20</div>
<div class="gt" style="left:820px;top:157px;letter-spacing:0.33px">2020-04-24</div>
<div class="gt" style="left:973px;top:157px">4</div>
<div class="a" style="left:203px;top:200px;width:801px;height:1px;background:#e6e6e6"></div>
<div class="a" style="left:230px;top:179px;width:1px;height:22px;background:#e6e6e6"></div>
<div class="a" style="left:411px;top:179px;width:1px;height:22px;background:#e6e6e6"></div>
<div class="a" style="left:498px;top:179px;width:1px;height:22px;background:#e6e6e6"></div>
<div class="a" style="left:664px;top:179px;width:1px;height:22px;background:#e6e6e6"></div>
<div class="a" style="left:816px;top:179px;width:1px;height:22px;background:#e6e6e6"></div>
<div class="a" style="left:969px;top:179px;width:1px;height:22px;background:#e6e6e6"></div>
<div class="a" style="left:990px;top:179px;width:1px;height:22px;background:#e6e6e6"></div>
<div class="a" style="left:210px;top:182px;width:13px;height:13px;border:1px solid #8f8f8f;background:linear-gradient(135deg,#c2c6d2,#e4e6ea 55%,#f8f8f8);box-shadow:inset 0 0 0 1px #fff"></div>
<div class="gt" style="left:234px;top:179px;letter-spacing:0.15px"><span class="c">香港</span>DHL-<span class="c">标准</span></div>
<div class="gt" style="left:415px;top:179px"><span class="c">美国</span></div>
<div class="gt" style="left:502px;top:179px;letter-spacing:0.25px">4175194240</div>
<div class="gt" style="left:668px;top:179px;letter-spacing:0.33px">2020-04-20</div>
<div class="gt" style="left:820px;top:179px;letter-spacing:0.33px">2020-04-24</div>
<div class="gt" style="left:973px;top:179px">4</div>
<div class="a" style="left:203px;top:222px;width:801px;height:1px;background:#e6e6e6"></div>
<div class="a" style="left:230px;top:201px;width:1px;height:22px;background:#e6e6e6"></div>
<div class="a" style="left:411px;top:201px;width:1px;height:22px;background:#e6e6e6"></div>
<div class="a" style="left:498px;top:201px;width:1px;height:22px;background:#e6e6e6"></div>
<div class="a" style="left:664px;top:201px;width:1px;height:22px;background:#e6e6e6"></div>
<div class="a" style="left:816px;top:201px;width:1px;height:22px;background:#e6e6e6"></div>
<div class="a" style="left:969px;top:201px;width:1px;height:22px;background:#e6e6e6"></div>
<div class="a" style="left:990px;top:201px;width:1px;height:22px;background:#e6e6e6"></div>
<div class="a" style="left:210px;top:204px;width:13px;height:13px;border:1px solid #8f8f8f;background:linear-gradient(135deg,#c2c6d2,#e4e6ea 55%,#f8f8f8);box-shadow:inset 0 0 0 1px #fff"></div>
<div class="gt" style="left:234px;top:201px;letter-spacing:0.15px"><span class="c">香港</span>DHL-<span class="c">标准</span></div>
<div class="gt" style="left:415px;top:201px"><span class="c">美国</span></div>
<div class="gt" style="left:502px;top:201px;letter-spacing:0.25px">4175206755</div>
<div class="gt" style="left:668px;top:201px;letter-spacing:0.33px">2020-04-20</div>
<div class="gt" style="left:820px;top:201px;letter-spacing:0.33px">2020-04-24</div>
<div class="gt" style="left:973px;top:201px">4</div>
<div class="a" style="left:203px;top:244px;width:801px;height:1px;background:#e6e6e6"></div>
<div class="a" style="left:230px;top:223px;width:1px;height:22px;background:#e6e6e6"></div>
<div class="a" style="left:411px;top:223px;width:1px;height:22px;background:#e6e6e6"></div>
<div class="a" style="left:498px;top:223px;width:1px;height:22px;background:#e6e6e6"></div>
<div class="a" style="left:664px;top:223px;width:1px;height:22px;background:#e6e6e6"></div>
<div class="a" style="left:816px;top:223px;width:1px;height:22px;background:#e6e6e6"></div>
<div class="a" style="left:969px;top:223px;width:1px;height:22px;background:#e6e6e6"></div>
<div class="a" style="left:990px;top:223px;width:1px;height:22px;background:#e6e6e6"></div>
<div class="a" style="left:210px;top:226px;width:13px;height:13px;border:1px solid #8f8f8f;background:linear-gradient(135deg,#c2c6d2,#e4e6ea 55%,#f8f8f8);box-shadow:inset 0 0 0 1px #fff"></div>
<div class="gt" style="left:234px;top:223px;letter-spacing:0.15px"><span class="c">香港</span>DHL-<span class="c">标准</span></div>
<div class="gt" style="left:415px;top:223px"><span class="c">美国</span></div>
<div class="gt" style="left:502px;top:223px;letter-spacing:0.25px">1282137463</div>
<div class="gt" style="left:668px;top:223px;letter-spacing:0.33px">2020-04-20</div>
<div class="gt" style="left:820px;top:223px;letter-spacing:0.33px">2020-04-24</div>
<div class="gt" style="left:973px;top:223px">4</div>
<div class="a" style="left:203px;top:266px;width:801px;height:1px;background:#e6e6e6"></div>
<div class="a" style="left:230px;top:245px;width:1px;height:22px;background:#e6e6e6"></div>
<div class="a" style="left:411px;top:245px;width:1px;height:22px;background:#e6e6e6"></div>
<div class="a" style="left:498px;top:245px;width:1px;height:22px;background:#e6e6e6"></div>
<div class="a" style="left:664px;top:245px;width:1px;height:22px;background:#e6e6e6"></div>
<div class="a" style="left:816px;top:245px;width:1px;height:22px;background:#e6e6e6"></div>
<div class="a" style="left:969px;top:245px;width:1px;height:22px;background:#e6e6e6"></div>
<div class="a" style="left:990px;top:245px;width:1px;height:22px;background:#e6e6e6"></div>
<div class="a" style="left:210px;top:248px;width:13px;height:13px;border:1px solid #8f8f8f;background:linear-gradient(135deg,#c2c6d2,#e4e6ea 55%,#f8f8f8);box-shadow:inset 0 0 0 1px #fff"></div>
<div class="gt" style="left:234px;top:245px;letter-spacing:0.15px"><span class="c">香港</span>DHL-<span class="c">标准</span></div>
<div class="gt" style="left:415px;top:245px"><span class="c">美国</span></div>
<div class="gt" style="left:502px;top:245px;letter-spacing:0.25px">1282132471</div>
<div class="gt" style="left:668px;top:245px;letter-spacing:0.33px">2020-04-20</div>
<div class="gt" style="left:820px;top:245px;letter-spacing:0.33px">2020-04-24</div>
<div class="gt" style="left:973px;top:245px">4</div>
<div class="a" style="left:203px;top:288px;width:801px;height:1px;background:#e6e6e6"></div>
<div class="a" style="left:230px;top:267px;width:1px;height:22px;background:#e6e6e6"></div>
<div class="a" style="left:411px;top:267px;width:1px;height:22px;background:#e6e6e6"></div>
<div class="a" style="left:498px;top:267px;width:1px;height:22px;background:#e6e6e6"></div>
<div class="a" style="left:664px;top:267px;width:1px;height:22px;background:#e6e6e6"></div>
<div class="a" style="left:816px;top:267px;width:1px;height:22px;background:#e6e6e6"></div>
<div class="a" style="left:969px;top:267px;width:1px;height:22px;background:#e6e6e6"></div>
<div class="a" style="left:990px;top:267px;width:1px;height:22px;background:#e6e6e6"></div>
<div class="a" style="left:210px;top:270px;width:13px;height:13px;border:1px solid #8f8f8f;background:linear-gradient(135deg,#c2c6d2,#e4e6ea 55%,#f8f8f8);box-shadow:inset 0 0 0 1px #fff"></div>
<div class="gt" style="left:234px;top:267px;letter-spacing:0.15px"><span class="c">香港</span>DHL-<span class="c">标准</span></div>
<div class="gt" style="left:415px;top:267px"><span class="c">美国</span></div>
<div class="gt" style="left:502px;top:267px;letter-spacing:0.25px">1282133672</div>
<div class="gt" style="left:668px;top:267px;letter-spacing:0.33px">2020-04-20</div>
<div class="gt" style="left:820px;top:267px;letter-spacing:0.33px">2020-04-24</div>
<div class="gt" style="left:973px;top:267px">4</div>
<div class="a" style="left:203px;top:310px;width:801px;height:1px;background:#e6e6e6"></div>
<div class="a" style="left:230px;top:289px;width:1px;height:22px;background:#e6e6e6"></div>
<div class="a" style="left:411px;top:289px;width:1px;height:22px;background:#e6e6e6"></div>
<div class="a" style="left:498px;top:289px;width:1px;height:22px;background:#e6e6e6"></div>
<div class="a" style="left:664px;top:289px;width:1px;height:22px;background:#e6e6e6"></div>
<div class="a" style="left:816px;top:289px;width:1px;height:22px;background:#e6e6e6"></div>
<div class="a" style="left:969px;top:289px;width:1px;height:22px;background:#e6e6e6"></div>
<div class="a" style="left:990px;top:289px;width:1px;height:22px;background:#e6e6e6"></div>
<div class="a" style="left:210px;top:292px;width:13px;height:13px;border:1px solid #8f8f8f;background:linear-gradient(135deg,#c2c6d2,#e4e6ea 55%,#f8f8f8);box-shadow:inset 0 0 0 1px #fff"></div>
<div class="gt" style="left:234px;top:289px;letter-spacing:0.15px"><span class="c">香港</span>DHL-<span class="c">标准</span></div>
<div class="gt" style="left:415px;top:289px"><span class="c">加拿大</span></div>
<div class="gt" style="left:502px;top:289px;letter-spacing:0.25px">1282172511</div>
<div class="gt" style="left:668px;top:289px;letter-spacing:0.33px">2020-04-20</div>
<div class="gt" style="left:820px;top:289px;letter-spacing:0.33px">2020-04-24</div>
<div class="gt" style="left:973px;top:289px">4</div>
<div class="a" style="left:203px;top:332px;width:801px;height:1px;background:#e6e6e6"></div>
<div class="a" style="left:230px;top:311px;width:1px;height:22px;background:#e6e6e6"></div>
<div class="a" style="left:411px;top:311px;width:1px;height:22px;background:#e6e6e6"></div>
<div class="a" style="left:498px;top:311px;width:1px;height:22px;background:#e6e6e6"></div>
<div class="a" style="left:664px;top:311px;width:1px;height:22px;background:#e6e6e6"></div>
<div class="a" style="left:816px;top:311px;width:1px;height:22px;background:#e6e6e6"></div>
<div class="a" style="left:969px;top:311px;width:1px;height:22px;background:#e6e6e6"></div>
<div class="a" style="left:990px;top:311px;width:1px;height:22px;background:#e6e6e6"></div>
<div class="a" style="left:210px;top:314px;width:13px;height:13px;border:1px solid #8f8f8f;background:linear-gradient(135deg,#c2c6d2,#e4e6ea 55%,#f8f8f8);box-shadow:inset 0 0 0 1px #fff"></div>
<div class="gt" style="left:234px;top:311px;letter-spacing:0.15px"><span class="c">香港</span>DHL-<span class="c">标准</span></div>
<div class="gt" style="left:415px;top:311px"><span class="c">美国</span></div>
<div class="gt" style="left:502px;top:311px;letter-spacing:0.25px">4175208402</div>
<div class="gt" style="left:668px;top:311px;letter-spacing:0.33px">2020-04-20</div>
<div class="gt" style="left:820px;top:311px;letter-spacing:0.33px">2020-04-24</div>
<div class="gt" style="left:973px;top:311px">4</div>
<div class="a" style="left:203px;top:354px;width:801px;height:1px;background:#e6e6e6"></div>
<div class="a" style="left:230px;top:333px;width:1px;height:22px;background:#e6e6e6"></div>
<div class="a" style="left:411px;top:333px;width:1px;height:22px;background:#e6e6e6"></div>
<div class="a" style="left:498px;top:333px;width:1px;height:22px;background:#e6e6e6"></div>
<div class="a" style="left:664px;top:333px;width:1px;height:22px;background:#e6e6e6"></div>
<div class="a" style="left:816px;top:333px;width:1px;height:22px;background:#e6e6e6"></div>
<div class="a" style="left:969px;top:333px;width:1px;height:22px;background:#e6e6e6"></div>
<div class="a" style="left:990px;top:333px;width:1px;height:22px;background:#e6e6e6"></div>
<div class="a" style="left:210px;top:336px;width:13px;height:13px;border:1px solid #8f8f8f;background:linear-gradient(135deg,#c2c6d2,#e4e6ea 55%,#f8f8f8);box-shadow:inset 0 0 0 1px #fff"></div>
<div class="gt" style="left:234px;top:333px;letter-spacing:0.15px"><span class="c">香港</span>DHL-<span class="c">标准</span></div>
<div class="gt" style="left:415px;top:333px"><span class="c">美国</span></div>
<div class="gt" style="left:502px;top:333px;letter-spacing:0.25px">4175211202</div>
<div class="gt" style="left:668px;top:333px;letter-spacing:0.33px">2020-04-20</div>
<div class="gt" style="left:820px;top:333px;letter-spacing:0.33px">2020-04-24</div>
<div class="gt" style="left:973px;top:333px">4</div>
<div class="a" style="left:203px;top:376px;width:801px;height:1px;background:#e6e6e6"></div>
<div class="a" style="left:230px;top:355px;width:1px;height:22px;background:#e6e6e6"></div>
<div class="a" style="left:411px;top:355px;width:1px;height:22px;background:#e6e6e6"></div>
<div class="a" style="left:498px;top:355px;width:1px;height:22px;background:#e6e6e6"></div>
<div class="a" style="left:664px;top:355px;width:1px;height:22px;background:#e6e6e6"></div>
<div class="a" style="left:816px;top:355px;width:1px;height:22px;background:#e6e6e6"></div>
<div class="a" style="left:969px;top:355px;width:1px;height:22px;background:#e6e6e6"></div>
<div class="a" style="left:990px;top:355px;width:1px;height:22px;background:#e6e6e6"></div>
<div class="a" style="left:210px;top:358px;width:13px;height:13px;border:1px solid #8f8f8f;background:linear-gradient(135deg,#c2c6d2,#e4e6ea 55%,#f8f8f8);box-shadow:inset 0 0 0 1px #fff"></div>
<div class="gt" style="left:234px;top:355px;letter-spacing:0.15px"><span class="c">香港</span>DHL-<span class="c">标准</span></div>
<div class="gt" style="left:415px;top:355px"><span class="c">美国</span></div>
<div class="gt" style="left:502px;top:355px;letter-spacing:0.25px">9026924351</div>
<div class="gt" style="left:668px;top:355px;letter-spacing:0.33px">2020-04-20</div>
<div class="gt" style="left:820px;top:355px;letter-spacing:0.33px">2020-04-24</div>
<div class="gt" style="left:973px;top:355px">4</div>
<div class="a" style="left:203px;top:398px;width:801px;height:1px;background:#e6e6e6"></div>
<div class="a" style="left:230px;top:377px;width:1px;height:22px;background:#e6e6e6"></div>
<div class="a" style="left:411px;top:377px;width:1px;height:22px;background:#e6e6e6"></div>
<div class="a" style="left:498px;top:377px;width:1px;height:22px;background:#e6e6e6"></div>
<div class="a" style="left:664px;top:377px;width:1px;height:22px;background:#e6e6e6"></div>
<div class="a" style="left:816px;top:377px;width:1px;height:22px;background:#e6e6e6"></div>
<div class="a" style="left:969px;top:377px;width:1px;height:22px;background:#e6e6e6"></div>
<div class="a" style="left:990px;top:377px;width:1px;height:22px;background:#e6e6e6"></div>
<div class="a" style="left:210px;top:380px;width:13px;height:13px;border:1px solid #8f8f8f;background:linear-gradient(135deg,#c2c6d2,#e4e6ea 55%,#f8f8f8);box-shadow:inset 0 0 0 1px #fff"></div>
<div class="gt" style="left:234px;top:377px;letter-spacing:0.15px"><span class="c">香港</span>DHL-<span class="c">标准</span></div>
<div class="gt" style="left:415px;top:377px"><span class="c">美国</span></div>
<div class="gt" style="left:502px;top:377px;letter-spacing:0.25px">9026926005</div>
<div class="gt" style="left:668px;top:377px;letter-spacing:0.33px">2020-04-20</div>
<div class="gt" style="left:820px;top:377px;letter-spacing:0.33px">2020-04-24</div>
<div class="gt" style="left:973px;top:377px">4</div>
<div class="a" style="left:203px;top:420px;width:801px;height:1px;background:#e6e6e6"></div>
<div class="a" style="left:230px;top:399px;width:1px;height:22px;background:#e6e6e6"></div>
<div class="a" style="left:411px;top:399px;width:1px;height:22px;background:#e6e6e6"></div>
<div class="a" style="left:498px;top:399px;width:1px;height:22px;background:#e6e6e6"></div>
<div class="a" style="left:664px;top:399px;width:1px;height:22px;background:#e6e6e6"></div>
<div class="a" style="left:816px;top:399px;width:1px;height:22px;background:#e6e6e6"></div>
<div class="a" style="left:969px;top:399px;width:1px;height:22px;background:#e6e6e6"></div>
<div class="a" style="left:990px;top:399px;width:1px;height:22px;background:#e6e6e6"></div>
<div class="a" style="left:210px;top:402px;width:13px;height:13px;border:1px solid #8f8f8f;background:linear-gradient(135deg,#c2c6d2,#e4e6ea 55%,#f8f8f8);box-shadow:inset 0 0 0 1px #fff"></div>
<div class="gt" style="left:234px;top:399px;letter-spacing:0.15px"><span class="c">香港</span>DHL-<span class="c">标准</span></div>
<div class="gt" style="left:415px;top:399px"><span class="c">美国</span></div>
<div class="gt" style="left:502px;top:399px;letter-spacing:0.25px">9026916964</div>
<div class="gt" style="left:668px;top:399px;letter-spacing:0.33px">2020-04-20</div>
<div class="gt" style="left:820px;top:399px;letter-spacing:0.33px">2020-04-24</div>
<div class="gt" style="left:973px;top:399px">4</div>
<div class="a" style="left:203px;top:442px;width:801px;height:1px;background:#e6e6e6"></div>
<div class="a" style="left:230px;top:421px;width:1px;height:22px;background:#e6e6e6"></div>
<div class="a" style="left:411px;top:421px;width:1px;height:22px;background:#e6e6e6"></div>
<div class="a" style="left:498px;top:421px;width:1px;height:22px;background:#e6e6e6"></div>
<div class="a" style="left:664px;top:421px;width:1px;height:22px;background:#e6e6e6"></div>
<div class="a" style="left:816px;top:421px;width:1px;height:22px;background:#e6e6e6"></div>
<div class="a" style="left:969px;top:421px;width:1px;height:22px;background:#e6e6e6"></div>
<div class="a" style="left:990px;top:421px;width:1px;height:22px;background:#e6e6e6"></div>
<div class="a" style="left:210px;top:424px;width:13px;height:13px;border:1px solid #8f8f8f;background:linear-gradient(135deg,#c2c6d2,#e4e6ea 55%,#f8f8f8);box-shadow:inset 0 0 0 1px #fff"></div>
<div class="gt" style="left:234px;top:421px;letter-spacing:0.15px"><span class="c">香港</span>DHL-<span class="c">标准</span></div>
<div class="gt" style="left:415px;top:421px"><span class="c">美国</span></div>
<div class="gt" style="left:502px;top:421px;letter-spacing:0.25px">9026919370</div>
<div class="gt" style="left:668px;top:421px;letter-spacing:0.33px">2020-04-20</div>
<div class="gt" style="left:820px;top:421px;letter-spacing:0.33px">2020-04-24</div>
<div class="gt" style="left:973px;top:421px">4</div>
<div class="a" style="left:203px;top:464px;width:801px;height:1px;background:#e6e6e6"></div>
<div class="a" style="left:230px;top:443px;width:1px;height:22px;background:#e6e6e6"></div>
<div class="a" style="left:411px;top:443px;width:1px;height:22px;background:#e6e6e6"></div>
<div class="a" style="left:498px;top:443px;width:1px;height:22px;background:#e6e6e6"></div>
<div class="a" style="left:664px;top:443px;width:1px;height:22px;background:#e6e6e6"></div>
<div class="a" style="left:816px;top:443px;width:1px;height:22px;background:#e6e6e6"></div>
<div class="a" style="left:969px;top:443px;width:1px;height:22px;background:#e6e6e6"></div>
<div class="a" style="left:990px;top:443px;width:1px;height:22px;background:#e6e6e6"></div>
<div class="a" style="left:210px;top:446px;width:13px;height:13px;border:1px solid #8f8f8f;background:linear-gradient(135deg,#c2c6d2,#e4e6ea 55%,#f8f8f8);box-shadow:inset 0 0 0 1px #fff"></div>
<div class="gt" style="left:234px;top:443px;letter-spacing:0.15px"><span class="c">香港</span>DHL-<span class="c">标准</span></div>
<div class="gt" style="left:415px;top:443px"><span class="c">德国</span></div>
<div class="gt" style="left:502px;top:443px;letter-spacing:0.25px">2823500260</div>
<div class="gt" style="left:668px;top:443px;letter-spacing:0.33px">2020-04-23</div>
<div class="gt" style="left:820px;top:443px;letter-spacing:0.33px">2020-04-28</div>
<div class="gt" style="left:973px;top:443px">5</div>
<div class="a" style="left:203px;top:486px;width:801px;height:1px;background:#e6e6e6"></div>
<div class="a" style="left:230px;top:465px;width:1px;height:22px;background:#e6e6e6"></div>
<div class="a" style="left:411px;top:465px;width:1px;height:22px;background:#e6e6e6"></div>
<div class="a" style="left:498px;top:465px;width:1px;height:22px;background:#e6e6e6"></div>
<div class="a" style="left:664px;top:465px;width:1px;height:22px;background:#e6e6e6"></div>
<div class="a" style="left:816px;top:465px;width:1px;height:22px;background:#e6e6e6"></div>
<div class="a" style="left:969px;top:465px;width:1px;height:22px;background:#e6e6e6"></div>
<div class="a" style="left:990px;top:465px;width:1px;height:22px;background:#e6e6e6"></div>
<div class="a" style="left:210px;top:468px;width:13px;height:13px;border:1px solid #8f8f8f;background:linear-gradient(135deg,#c2c6d2,#e4e6ea 55%,#f8f8f8);box-shadow:inset 0 0 0 1px #fff"></div>
<div class="gt" style="left:234px;top:465px;letter-spacing:0.15px"><span class="c">香港</span>DHL-<span class="c">标准</span></div>
<div class="gt" style="left:415px;top:465px"><span class="c">法国</span></div>
<div class="gt" style="left:502px;top:465px;letter-spacing:0.25px">2823511644</div>
<div class="gt" style="left:668px;top:465px;letter-spacing:0.33px">2020-04-23</div>
<div class="gt" style="left:820px;top:465px;letter-spacing:0.33px">2020-04-28</div>
<div class="gt" style="left:973px;top:465px">5</div>
<div class="a" style="left:203px;top:508px;width:801px;height:1px;background:#e6e6e6"></div>
<div class="a" style="left:230px;top:487px;width:1px;height:22px;background:#e6e6e6"></div>
<div class="a" style="left:411px;top:487px;width:1px;height:22px;background:#e6e6e6"></div>
<div class="a" style="left:498px;top:487px;width:1px;height:22px;background:#e6e6e6"></div>
<div class="a" style="left:664px;top:487px;width:1px;height:22px;background:#e6e6e6"></div>
<div class="a" style="left:816px;top:487px;width:1px;height:22px;background:#e6e6e6"></div>
<div class="a" style="left:969px;top:487px;width:1px;height:22px;background:#e6e6e6"></div>
<div class="a" style="left:990px;top:487px;width:1px;height:22px;background:#e6e6e6"></div>
<div class="a" style="left:210px;top:490px;width:13px;height:13px;border:1px solid #8f8f8f;background:linear-gradient(135deg,#c2c6d2,#e4e6ea 55%,#f8f8f8);box-shadow:inset 0 0 0 1px #fff"></div>
<div class="gt" style="left:234px;top:487px;letter-spacing:0.15px"><span class="c">香港</span>DHL-<span class="c">标准</span></div>
<div class="gt" style="left:415px;top:487px"><span class="c">美国</span></div>
<div class="gt" style="left:502px;top:487px;letter-spacing:0.25px">7983560351</div>
<div class="gt" style="left:668px;top:487px;letter-spacing:0.33px">2020-04-23</div>
<div class="gt" style="left:820px;top:487px;letter-spacing:0.33px">2020-04-28</div>
<div class="gt" style="left:973px;top:487px">5</div>
<div class="a" style="left:203px;top:530px;width:801px;height:1px;background:#e6e6e6"></div>
<div class="a" style="left:230px;top:509px;width:1px;height:22px;background:#e6e6e6"></div>
<div class="a" style="left:411px;top:509px;width:1px;height:22px;background:#e6e6e6"></div>
<div class="a" style="left:498px;top:509px;width:1px;height:22px;background:#e6e6e6"></div>
<div class="a" style="left:664px;top:509px;width:1px;height:22px;background:#e6e6e6"></div>
<div class="a" style="left:816px;top:509px;width:1px;height:22px;background:#e6e6e6"></div>
<div class="a" style="left:969px;top:509px;width:1px;height:22px;background:#e6e6e6"></div>
<div class="a" style="left:990px;top:509px;width:1px;height:22px;background:#e6e6e6"></div>
<div class="a" style="left:210px;top:512px;width:13px;height:13px;border:1px solid #8f8f8f;background:linear-gradient(135deg,#c2c6d2,#e4e6ea 55%,#f8f8f8);box-shadow:inset 0 0 0 1px #fff"></div>
<div class="gt" style="left:234px;top:509px;letter-spacing:0.15px"><span class="c">香港</span>DHL-<span class="c">标准</span></div>
<div class="gt" style="left:415px;top:509px"><span class="c">意大利</span></div>
<div class="gt" style="left:502px;top:509px;letter-spacing:0.25px">7983596073</div>
<div class="gt" style="left:668px;top:509px;letter-spacing:0.33px">2020-04-23</div>
<div class="gt" style="left:820px;top:509px;letter-spacing:0.33px">2020-04-28</div>
<div class="gt" style="left:973px;top:509px">5</div>
<div class="a" style="left:203px;top:552px;width:801px;height:1px;background:#e6e6e6"></div>
<div class="a" style="left:230px;top:531px;width:1px;height:22px;background:#e6e6e6"></div>
<div class="a" style="left:411px;top:531px;width:1px;height:22px;background:#e6e6e6"></div>
<div class="a" style="left:498px;top:531px;width:1px;height:22px;background:#e6e6e6"></div>
<div class="a" style="left:664px;top:531px;width:1px;height:22px;background:#e6e6e6"></div>
<div class="a" style="left:816px;top:531px;width:1px;height:22px;background:#e6e6e6"></div>
<div class="a" style="left:969px;top:531px;width:1px;height:22px;background:#e6e6e6"></div>
<div class="a" style="left:990px;top:531px;width:1px;height:22px;background:#e6e6e6"></div>
<div class="a" style="left:210px;top:534px;width:13px;height:13px;border:1px solid #8f8f8f;background:linear-gradient(135deg,#c2c6d2,#e4e6ea 55%,#f8f8f8);box-shadow:inset 0 0 0 1px #fff"></div>
<div class="gt" style="left:234px;top:531px;letter-spacing:0.15px"><span class="c">香港</span>DHL-<span class="c">标准</span></div>
<div class="gt" style="left:415px;top:531px"><span class="c">美国</span></div>
<div class="gt" style="left:502px;top:531px;letter-spacing:0.25px">7220099051</div>
<div class="gt" style="left:668px;top:531px;letter-spacing:0.33px">2020-04-22</div>
<div class="gt" style="left:820px;top:531px;letter-spacing:0.33px">2020-04-27</div>
<div class="gt" style="left:973px;top:531px">5</div>
<div class="a" style="left:203px;top:574px;width:801px;height:1px;background:#e6e6e6"></div>
<div class="a" style="left:230px;top:553px;width:1px;height:22px;background:#e6e6e6"></div>
<div class="a" style="left:411px;top:553px;width:1px;height:22px;background:#e6e6e6"></div>
<div class="a" style="left:498px;top:553px;width:1px;height:22px;background:#e6e6e6"></div>
<div class="a" style="left:664px;top:553px;width:1px;height:22px;background:#e6e6e6"></div>
<div class="a" style="left:816px;top:553px;width:1px;height:22px;background:#e6e6e6"></div>
<div class="a" style="left:969px;top:553px;width:1px;height:22px;background:#e6e6e6"></div>
<div class="a" style="left:990px;top:553px;width:1px;height:22px;background:#e6e6e6"></div>
<div class="a" style="left:210px;top:556px;width:13px;height:13px;border:1px solid #8f8f8f;background:linear-gradient(135deg,#c2c6d2,#e4e6ea 55%,#f8f8f8);box-shadow:inset 0 0 0 1px #fff"></div>
<div class="gt" style="left:234px;top:553px;letter-spacing:0.15px"><span class="c">香港</span>DHL-<span class="c">标准</span></div>
<div class="gt" style="left:415px;top:553px"><span class="c">意大利</span></div>
<div class="gt" style="left:502px;top:553px;letter-spacing:0.25px">6832833895</div>
<div class="gt" style="left:668px;top:553px;letter-spacing:0.33px">2020-04-22</div>
<div class="gt" style="left:820px;top:553px;letter-spacing:0.33px">2020-04-27</div>
<div class="gt" style="left:973px;top:553px">5</div>
<div class="a" style="left:203px;top:596px;width:801px;height:1px;background:#e6e6e6"></div>
<div class="a" style="left:230px;top:575px;width:1px;height:22px;background:#e6e6e6"></div>
<div class="a" style="left:411px;top:575px;width:1px;height:22px;background:#e6e6e6"></div>
<div class="a" style="left:498px;top:575px;width:1px;height:22px;background:#e6e6e6"></div>
<div class="a" style="left:664px;top:575px;width:1px;height:22px;background:#e6e6e6"></div>
<div class="a" style="left:816px;top:575px;width:1px;height:22px;background:#e6e6e6"></div>
<div class="a" style="left:969px;top:575px;width:1px;height:22px;background:#e6e6e6"></div>
<div class="a" style="left:990px;top:575px;width:1px;height:22px;background:#e6e6e6"></div>
<div class="a" style="left:210px;top:578px;width:13px;height:13px;border:1px solid #8f8f8f;background:linear-gradient(135deg,#c2c6d2,#e4e6ea 55%,#f8f8f8);box-shadow:inset 0 0 0 1px #fff"></div>
<div class="gt" style="left:234px;top:575px;letter-spacing:0.15px"><span class="c">香港</span>DHL-<span class="c">标准</span></div>
<div class="gt" style="left:415px;top:575px"><span class="c">希腊</span></div>
<div class="gt" style="left:502px;top:575px;letter-spacing:0.25px">8118386124</div>
<div class="gt" style="left:668px;top:575px;letter-spacing:0.33px">2020-04-22</div>
<div class="gt" style="left:820px;top:575px;letter-spacing:0.33px">2020-04-27</div>
<div class="gt" style="left:973px;top:575px">5</div>
</body></html>
